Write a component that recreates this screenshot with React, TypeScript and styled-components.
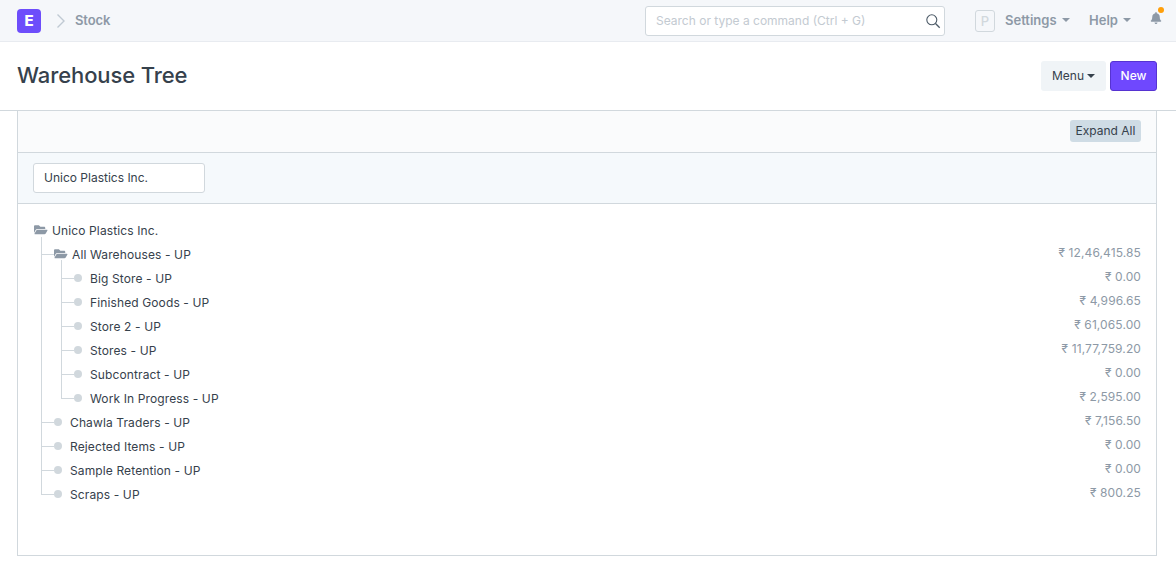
import * as React from 'react';
import styled, { createGlobalStyle } from 'styled-components';
import { FaFolderOpen, FaBell } from 'react-icons/fa';

interface ITreeNode {
  label: string;
  amount?: string;
  children?: ITreeNode[];
}

const tree: ITreeNode = {
  label: 'Unico Plastics Inc.',
  children: [
    {
      label: 'All Warehouses - UP',
      amount: '₹ 12,46,415.85',
      children: [
        { label: 'Big Store - UP', amount: '₹ 0.00' },
        { label: 'Finished Goods - UP', amount: '₹ 4,996.65' },
        { label: 'Store 2 - UP', amount: '₹ 61,065.00' },
        { label: 'Stores - UP', amount: '₹ 11,77,759.20' },
        { label: 'Subcontract - UP', amount: '₹ 0.00' },
        { label: 'Work In Progress - UP', amount: '₹ 2,595.00' },
      ],
    },
    { label: 'Chawla Traders - UP', amount: '₹ 7,156.50' },
    { label: 'Rejected Items - UP', amount: '₹ 0.00' },
    { label: 'Sample Retention - UP', amount: '₹ 0.00' },
    { label: 'Scraps - UP', amount: '₹ 800.25' },
  ],
};

const TreeRow = ({ node, root }: { node: ITreeNode; root?: boolean }) => (
  <Row>
    {node.children ? (
      <FolderSlot $root={root}>
        <FaFolderOpen />
      </FolderSlot>
    ) : (
      <Dot />
    )}
    <Label>{node.label}</Label>
    {node.amount && <Amount>{node.amount}</Amount>}
  </Row>
);

const TreeBranch = ({ nodes, top }: { nodes: ITreeNode[]; top: number }) => (
  <Branch>
    {nodes.map((node) => (
      <Leaf key={node.label} $top={top}>
        <TreeRow node={node} />
        {node.children && <TreeBranch nodes={node.children} top={6} />}
      </Leaf>
    ))}
  </Branch>
);

export default function App() {
  return (
    <>
      <GlobalStyle />
      <Navbar>
        <Logo>E</Logo>
        <Crumb>
          <svg width='10' height='16' viewBox='0 0 10 16' fill='none'>
            <path d='M1.5 1.5L8 8l-6.5 6.5' stroke='#c0c9d3' strokeWidth='1.4' />
          </svg>
        </Crumb>
        <CrumbLabel>Stock</CrumbLabel>
        <NavRight>
          <SearchBox>
            <SearchText>Search or type a command (Ctrl + G)</SearchText>
            <svg width='16' height='16' viewBox='0 0 16 16' fill='none'>
              <circle cx='6.8' cy='6.8' r='5' stroke='#4c5a67' strokeWidth='1.1' />
              <path d='M10.5 10.5l4.2 4.2' stroke='#4c5a67' strokeWidth='1.3' />
            </svg>
          </SearchBox>
          <Avatar>P</Avatar>
          <NavLink $width={84}>
            Settings
            <Caret $color='#8d99a6' $gap={5} />
          </NavLink>
          <NavLink $width={61}>
            Help
            <Caret $color='#8d99a6' $gap={5} />
          </NavLink>
          <BellWrap>
            <FaBell />
            <Badge />
          </BellWrap>
        </NavRight>
      </Navbar>
      <PageHead>
        <Title>Warehouse Tree</Title>
        <Actions>
          <MenuButton>
            Menu
            <Caret $color='#36414c' $gap={3} />
          </MenuButton>
          <NewButton>New</NewButton>
        </Actions>
      </PageHead>
      <Panel>
        <Toolbar>
          <ExpandButton>Expand All</ExpandButton>
        </Toolbar>
        <FilterBar>
          <CompanyInput>Unico Plastics Inc.</CompanyInput>
        </FilterBar>
        <TreeBody>
          <TreeRow node={tree} root />
          <TreeBranch nodes={tree.children || []} top={5} />
        </TreeBody>
      </Panel>
    </>
  );
}

const GlobalStyle = createGlobalStyle`
  html, body {
    margin: 0;
    background: #fff;
  }
  body {
    font-family: Inter, "Noto Sans", sans-serif;
    font-size: 13px;
    color: #36414c;
    -webkit-font-smoothing: antialiased;
  }
`;

const Navbar = styled.header`
  display: flex;
  align-items: center;
  height: 41px;
  padding: 0 14px 0 17px;
  background: #f5f7fa;
  border-bottom: 1px solid #e8ebf0;
`;

const Logo = styled.div`
  display: flex;
  align-items: center;
  justify-content: center;
  width: 24px;
  height: 24px;
  border-radius: 4px;
  background: #6d4dfb;
  color: #fff;
  font-size: 15px;
  font-weight: 800;
`;

const Crumb = styled.span`
  display: flex;
  margin-left: 15px;
`;

const CrumbLabel = styled.span`
  margin-left: 9px;
  margin-top: -1px;
  color: #8d99a6;
  font-size: 13px;
  font-weight: 600;
  letter-spacing: -0.1px;
`;

const NavRight = styled.div`
  display: flex;
  align-items: center;
  margin-left: auto;
`;

const SearchBox = styled.div`
  box-sizing: border-box;
  display: flex;
  align-items: center;
  justify-content: space-between;
  width: 300px;
  height: 30px;
  padding: 0 3px 0 10px;
  background: #fff;
  border: 1px solid #d1d8dd;
  border-radius: 3px;
`;

const SearchText = styled.span`
  color: #c3cad1;
  font-size: 12px;
`;

const Avatar = styled.div`
  box-sizing: border-box;
  display: flex;
  align-items: center;
  justify-content: center;
  width: 20px;
  height: 22px;
  margin-left: 30px;
  background: #f5f7fa;
  border: 1px solid #d1d8dd;
  border-radius: 3px;
  color: #d1d8dd;
  font-size: 13px;
  font-weight: 500;
`;

const NavLink = styled.span<{ $width: number }>`
  display: flex;
  align-items: center;
  width: ${(props) => props.$width}px;
  margin-left: 10px;
  margin-top: -2px;
  color: #8d99a6;
  font-size: 13px;
  font-weight: 600;
  &:last-of-type {
    margin-left: 0;
  }
`;

const Caret = styled.i<{ $color: string; $gap: number }>`
  display: inline-block;
  margin-left: ${(props) => props.$gap}px;
  border-top: 4px solid ${(props) => props.$color};
  border-left: 4px solid transparent;
  border-right: 4px solid transparent;
`;

const BellWrap = styled.div`
  position: relative;
  display: flex;
  color: #8d99a6;
  font-size: 12px;
  margin-top: -5px;
`;

const Badge = styled.span`
  position: absolute;
  top: -5px;
  right: -2px;
  width: 6px;
  height: 6px;
  border-radius: 50%;
  background: #ff9f0a;
`;

const PageHead = styled.div`
  display: flex;
  align-items: center;
  justify-content: space-between;
  height: 68px;
  padding: 0 19px 0 17px;
  border-bottom: 1px solid #d1d8dd;
`;

const Title = styled.h1`
  margin: 0 0 2px;
  font-size: 22px;
  font-weight: 500;
  letter-spacing: -0.1px;
  color: #36414c;
`;

const Actions = styled.div`
  display: flex;
  gap: 4px;
`;

const MenuButton = styled.div`
  box-sizing: border-box;
  display: flex;
  align-items: center;
  justify-content: center;
  width: 65px;
  height: 30px;
  padding-bottom: 1px;
  background: #f0f4f7;
  border-radius: 3px;
  color: #36414c;
  font-size: 12px;
`;

const NewButton = styled.div`
  box-sizing: border-box;
  display: flex;
  align-items: center;
  justify-content: center;
  width: 47px;
  height: 30px;
  padding-bottom: 1px;
  background: #6f48fe;
  border: 1px solid #5633d1;
  border-radius: 3px;
  color: #fff;
  font-size: 12px;
  font-weight: 500;
`;

const Panel = styled.section`
  box-sizing: border-box;
  height: 445px;
  margin: 0 19px 0 17px;
  border: 1px solid #d1d8dd;
  border-top: none;
`;

const Toolbar = styled.div`
  display: flex;
  align-items: flex-start;
  justify-content: flex-end;
  height: 32px;
  padding: 9px 15px 0;
  background: #fafbfc;
  border-bottom: 1px solid #d1d8dd;
`;

const ExpandButton = styled.div`
  display: flex;
  align-items: center;
  justify-content: center;
  box-sizing: border-box;
  width: 71px;
  height: 22px;
  padding-bottom: 1px;
  background: #cfdce5;
  border-radius: 3px;
  color: #36414c;
  font-size: 12px;
`;

const FilterBar = styled.div`
  display: flex;
  align-items: center;
  height: 50px;
  padding: 0 15px;
  background: #f5f9fc;
  border-bottom: 1px solid #d1d8dd;
`;

const CompanyInput = styled.div`
  box-sizing: border-box;
  display: flex;
  align-items: center;
  width: 172px;
  height: 30px;
  padding: 0 10px 2px;
  background: #fff;
  border: 1px solid #d1d8dd;
  border-radius: 3px;
  font-size: 12px;
`;

const TreeBody = styled.div`
  padding: 14px 15px 0;
`;

const Row = styled.div`
  display: flex;
  align-items: center;
  height: 24px;
`;

const FolderSlot = styled.span<{ $root?: boolean }>`
  display: flex;
  flex-shrink: 0;
  width: 15px;
  margin-left: ${(props) => (props.$root ? '1px' : '0')};
  margin-right: 3px;
  margin-top: -1px;
  color: #8d99a6;
  font-size: 13.5px;
`;

const Dot = styled.span`
  width: 8px;
  height: 8px;
  margin-right: 8px;
  margin-top: -1px;
  border-radius: 50%;
  background: #d1d8dd;
`;

const Label = styled.span`
  color: #36414c;
  font-size: 12px;
  letter-spacing: 0.12px;
`;

const Amount = styled.span`
  margin-left: auto;
  padding-bottom: 4px;
  color: #8d99a6;
  font-size: 12px;
  letter-spacing: 0.1px;
`;

const Branch = styled.ul`
  margin: 0 0 0 8px;
  padding: 0;
  list-style: none;
  & & {
    margin-left: 7px;
  }
`;

const Leaf = styled.li<{ $top: number }>`
  position: relative;
  padding-left: 13px;
  &::before {
    content: '';
    position: absolute;
    left: 0;
    top: -${(props) => props.$top}px;
    bottom: 0;
    border-left: 1px solid #d1d8dd;
  }
  &:not(:first-child)::before {
    top: 0;
  }
  &:last-child::before {
    bottom: auto;
    height: 12px;
  }
  &:first-child:last-child::before {
    height: ${(props) => props.$top + 12}px;
  }
  &::after {
    content: '';
    position: absolute;
    left: 0;
    top: 12px;
    width: 13px;
    border-top: 1px solid #d1d8dd;
  }
`;
